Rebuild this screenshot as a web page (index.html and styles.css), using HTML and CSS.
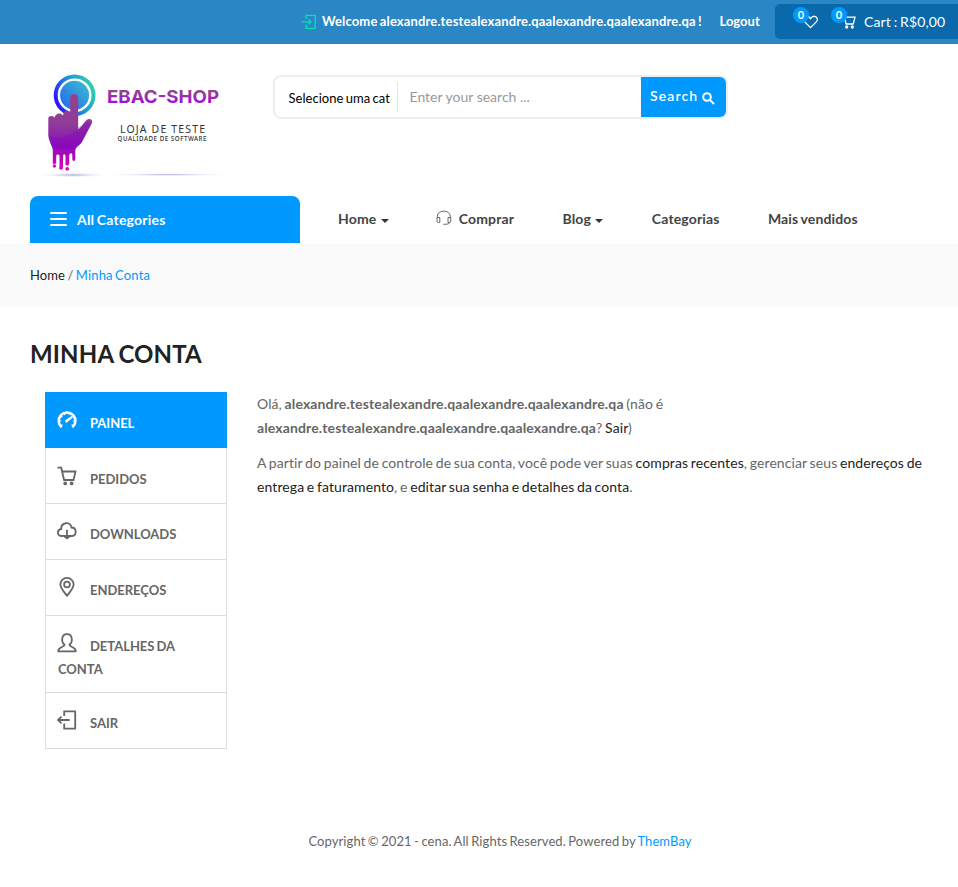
FILE: index.html
```html
<!DOCTYPE html>
<html lang="pt-BR">
<head>
<meta charset="utf-8">
<title>Minha Conta</title>
<link rel="stylesheet" href="styles.css">
</head>
<body>
<div class="topbar">
  <svg class="login-icon" width="16" height="16" viewBox="0 0 16 16"><path d="M5.2 5V1.3H14.2V14.3H5.2V10.5M.2 7.8H10M7.5 5.3L10 7.8L7.5 10.3"/></svg>
  <strong class="welcome">Welcome alexandre.testealexandre.qaalexandre.qaalexandre.qa !</strong>
  <a class="logout">Logout</a>
  <div class="cart-box">
    <div class="wish"><svg width="16" height="14" viewBox="0 0 16 14"><path d="M7.5 12.6L1.5 6.6C-.1 4.7.6 1.8 3.5 1.3C5.2 1.1 6.5 2 7.5 3.6C8.5 2 9.8 1.1 11.5 1.3C14.4 1.8 15.1 4.7 13.5 6.6Z"/></svg><span class="badge">0</span></div>
    <div class="cart"><svg width="15" height="14" viewBox="0 0 15 14"><path d="M.5 1.2H3L5.1 9H12.2L14 2.2H3.4"/><circle cx="5.7" cy="12" r="1"/><circle cx="11.3" cy="12" r="1"/></svg><span class="badge">0</span></div>
    <span class="cart-total">Cart : R$0,00</span>
  </div>
</div>
<header class="header">
  <svg class="logo" width="210" height="120" viewBox="0 0 210 120">
    <defs>
      <linearGradient id="ring" x1="0" y1=".7" x2="1" y2=".2"><stop offset="0" stop-color="#2c10ff"/><stop offset=".5" stop-color="#1c91dd"/><stop offset="1" stop-color="#30d5ac"/></linearGradient>
      <linearGradient id="disc" x1="0" y1="1" x2="1" y2="0"><stop offset="0" stop-color="#2463ed"/><stop offset="1" stop-color="#39c1cf"/></linearGradient>
      <linearGradient id="hand" x1="0" y1="0" x2="0" y2="1"><stop offset="0" stop-color="#96408c"/><stop offset=".4" stop-color="#903c9a"/><stop offset=".7" stop-color="#8c0cbc"/><stop offset="1" stop-color="#e500b4"/></linearGradient>
      <linearGradient id="name" x1="0" y1="0" x2="0" y2="1"><stop offset=".25" stop-color="#934489"/><stop offset=".8" stop-color="#a010d8"/></linearGradient>
      <radialGradient id="shade"><stop offset="0" stop-color="#aaa7dc"/><stop offset="1" stop-color="#fff" stop-opacity="0"/></radialGradient>
    </defs>
    <circle class="ring" cx="44.6" cy="30.3" r="18.9"/>
    <circle cx="44.6" cy="30.3" r="14.5" fill="url(#disc)"/>
    <path fill="url(#hand)" d="M40.2 33C40.2 27.5 48.2 27.5 48.2 33V64.5C51 63 53.5 58 56.5 55C59.5 53 63 54.5 62 58L53 75C51 80 46 81.5 45.3 85V94C45.3 96.5 42.3 96.5 42.3 94V90C42.3 87.5 39.2 87.5 39.2 91V99H35.5V91C35.3 88.5 33 88.5 33 91.5V103C33 104.5 29.5 104.5 29.5 103V91C29.3 89 26.2 89 26.2 91V98H22.8V85C22 80 18.5 76 18.3 70V53C18.5 50.3 24.5 50.3 24.8 53C24.8 47.5 32.3 47 33 51C33.3 44.5 39.5 44.5 40.2 48Z"/>
    <path d="M19 71C31 75 45 68 49 62L58 56L61 59L52 77L45 84H24Z" fill="#8000b8" opacity=".3"/>
    <circle cx="24.4" cy="97.5" r="1.7" fill="#cb0eb7"/><circle cx="24.4" cy="101" r="1.7" fill="#dd08b7"/><circle cx="30.9" cy="103" r="1.8" fill="#df08bc"/><circle cx="37.2" cy="99" r="1.8" fill="#cb0eb7"/><circle cx="37.2" cy="103.8" r="1.9" fill="#e606c0"/>
    <ellipse cx="43" cy="110" rx="36" ry="2.5" fill="url(#shade)"/><ellipse cx="138" cy="109.7" rx="66" ry="1.5" fill="url(#shade)"/>
    <text class="logo-name" x="77" y="38" textLength="112" lengthAdjust="spacingAndGlyphs" fill="url(#name)">EBAC-SHOP</text>
    <text class="logo-sub" x="90" y="68" textLength="85">LOJA DE TESTE</text>
    <text class="logo-tag" x="87.5" y="75.8" textLength="89">QUALIDADE DE SOFTWARE</text>
  </svg>
  <div class="search">
    <span class="category">Selecione uma cat</span>
    <span class="query">Enter your search ...</span>
    <span class="search-button">Search <svg width="13" height="13" viewBox="0 0 13 13"><circle cx="5" cy="5" r="3.8"/><path d="M7.9 7.9L12 12"/></svg></span>
  </div>
</header>
<div class="navrow">
  <div class="all-categories"><span class="bars"><i></i><i></i><i></i></span>All Categories</div>
  <nav class="nav">
    <a>Home<span class="caret"></span></a>
    <a><svg class="headset" width="16" height="16" viewBox="0 0 16 16"><path d="M1.3 7.5V6.3C1.3-.6 14.3-.6 14.3 6.3V7.5M1 7.5H3.8V12.5H2.5Q1 12.5 1 11ZM14.8 7.5H12V12.5H13.3Q14.8 12.5 14.8 11ZM13.5 12.5Q13.5 14.3 9.5 14.3H7.4"/></svg>Comprar</a>
    <a>Blog<span class="caret"></span></a>
    <a>Categorias</a>
    <a>Mais vendidos</a>
  </nav>
</div>
<div class="breadcrumb"><a>Home</a> / <span class="current">Minha Conta</span></div>
<main class="main">
  <h1>MINHA CONTA</h1>
  <div class="account">
    <ul class="menu">
      <li class="active"><svg viewBox="0 0 20 20"><path class="gauge" d="M4.7 17.3A8.4 8.4 0 1 1 15.4 17.3"/><path class="ticks" d="M1.5 11H4.2M3.5 5.8L5.4 7.2M7.1 3L8 5.1M12.9 3L12 5.1M18.5 11H15.8M3.5 15H5.7M16.5 15H14.3"/><path class="needle" d="M9.2 12.5L8.5 10.6L15 6.3L15.6 7.3Z"/></svg>PAINEL</li>
      <li><svg viewBox="0 0 20 20"><path d="M.5 1.7H4.2L7.1 14H16.5L18.5 5.5H5.3"/><circle cx="8.2" cy="17.4" r="1"/><circle cx="14.6" cy="17.4" r="1"/></svg>PEDIDOS</li>
      <li class="upper"><svg viewBox="0 0 20 20"><path d="M5.8 15H4.8C-.2 15-.3 8.5 4.2 8.2C3.8 1 13.5.1 14.5 6.5C19.8 6.4 20.2 15 15 15H13.2M10 8.8V17M6.8 15H13.2L10 17.4Z"/></svg>DOWNLOADS</li>
      <li class="upper"><svg viewBox="0 0 20 20"><path d="M10 18.7C7.2 14.8 3.4 11.5 3.4 7.5A6.6 6.6 0 0 1 16.6 7.5C16.6 11.5 12.8 14.8 10 18.7Z"/><circle cx="10" cy="7.5" r="2.9"/></svg>ENDEREÇOS</li>
      <li class="upper tall"><svg viewBox="0 0 20 20"><path d="M7.6 11.8C4.3 9.6 3.8 1.2 10 1.2S15.7 9.6 12.4 11.8C12.4 14.2 18.7 14 18.7 17.7V18.4H1.3V17.7C1.3 14 7.6 14.2 7.6 11.8Z"/></svg>DETALHES DA CONTA</li>
      <li class="upper"><svg viewBox="0 0 20 20"><path d="M7.2 6V1.3H18.2V18.7H7.2V13.5M1 10H12.7M4.5 6.7L1 10L4.5 13.3"/></svg>SAIR</li>
    </ul>
    <div class="content">
      <p>Olá, <strong>alexandre.testealexandre.qaalexandre.qaalexandre.qa</strong> (não é <strong>alexandre.testealexandre.qaalexandre.qaalexandre.qa</strong>? <a>Sair</a>)</p>
      <p>A partir do painel de controle de sua conta, você pode ver suas <a>compras recentes</a>, gerenciar seus <a>endereços de entrega e faturamento</a>, e <a>editar sua senha e detalhes da conta</a>.</p>
    </div>
  </div>
</main>
<footer class="footer">Copyright © 2021 - cena. All Rights Reserved. Powered by <a>ThemBay</a></footer>
</body>
</html>
```
FILE: styles.css
```css
* { box-sizing: border-box; }
body { margin: 0; height: 887px; overflow: hidden; background: #fff; color: #666; font: 14px/24px Lato, sans-serif; letter-spacing: .09px; word-spacing: -1px; }
svg { fill: none; stroke: currentColor; }
.topbar { height: 44px; background: #2a86c4; color: #fff; display: flex; align-items: flex-start; padding: 4px 0 0 301px; font-size: 13px; white-space: nowrap; }
.login-icon { flex: none; color: #00e5b4; margin: 10px 5px 0 0; stroke-width: 1.3; }
.welcome { width: 397.5px; line-height: 34px; letter-spacing: .14px; }
.logout { width: 55.5px; font-weight: bold; line-height: 34px; letter-spacing: 0; }
.cart-box { flex: 1; height: 35px; background: #0a69ab; border-radius: 5px 0 0 5px; display: flex; }
.wish, .cart { position: relative; margin-top: 11px; height: 14px; line-height: 0; stroke-width: 1.3; }
.wish { margin-left: 28px; width: 38px; }
.cart { width: 23px; }
.badge { position: absolute; left: -10px; top: -8px; width: 16px; height: 16px; border-radius: 50%; background: #09f; text-align: center; font: bold 11px/16px Lato, sans-serif; }
.cart-total { font-size: 14px; line-height: 36px; letter-spacing: .13px; }
.header { height: 152px; display: flex; padding-left: 30px; }
.logo { margin-top: 21px; stroke: none; flex: none; letter-spacing: 0; word-spacing: 0; }
.ring { fill: #fff; stroke: url(#ring); stroke-width: 4; }
.logo-name { font: bold 18px Inter, sans-serif; }
.logo-sub { font: 10.5px "Noto Sans", sans-serif; fill: #333; }
.logo-tag { font: 500 6.2px "Noto Sans", sans-serif; fill: #333; }
.search { margin: 31px 0 0 33px; width: 455px; height: 44px; border: 2px solid #eee; border-radius: 8px; display: flex; align-items: center; overflow: hidden; }
.category { width: 123px; height: 30px; line-height: 33px; padding-left: 13.5px; border-right: 1px solid #e5e5e5; color: #000; font-size: 13px; letter-spacing: .03px; white-space: nowrap; }
.query { flex: 1; padding-left: 11.5px; color: #999; line-height: 38px; letter-spacing: 0; word-spacing: 0; }
.search-button { width: 85px; height: 40px; background: #09f; color: #fff; padding-left: 9px; line-height: 38px; font-weight: 600; letter-spacing: 1.1px; white-space: nowrap; }
.search-button svg { stroke-width: 2; vertical-align: -4px; }
.navrow { display: flex; height: 48px; padding-left: 30px; }
.all-categories { width: 270px; height: 47px; border-radius: 8px 8px 0 0; background: #09f; color: #fff; display: flex; gap: 10px; padding-left: 20px; font-weight: bold; line-height: 48px; letter-spacing: .2px; }
.bars { display: flex; flex-direction: column; gap: 4px; margin-top: 16px; width: 17px; }
.bars i { height: 2px; border-radius: 1px; background: #fff; flex: none; }
.nav { display: flex; gap: 48.4px; margin-left: 38px; font-weight: bold; color: #444; line-height: 46px; letter-spacing: .14px; white-space: nowrap; }
.caret { display: inline-block; border: 4px solid transparent; border-top-color: #333; border-bottom: 0; margin-left: 4.5px; vertical-align: 1px; }
.headset { vertical-align: -2px; margin: 0 6.5px 0 -1px; stroke-width: .8; }
.breadcrumb { height: 62px; background: #fafafa; padding: 19px 30px; font-size: 13px; }
.breadcrumb a { color: #222; }
.breadcrumb .current { letter-spacing: .15px; }
.breadcrumb .current, .footer a { color: #09f; }
.main { height: 443px; padding: 30px 30px 0; }
h1 { margin: 0; font-size: 24px; line-height: 36px; color: #222; font-weight: bold; letter-spacing: .15px; }
.account { display: flex; padding: 20px 0 0 15px; }
.menu { list-style: none; margin: 0; padding: 0; width: 182px; flex: none; letter-spacing: -.03px; }
.menu li { height: 56px; border: 1px solid #ddd; border-top: 0; padding: 18.5px 12px 0; line-height: 23px; font-size: 13px; font-weight: bold; color: #666; }
.menu li.upper { padding-top: 17.5px; }
.menu li.tall { height: 77px; }
.menu li.active { background: #09f; border-color: #09f; color: #fff; }
.menu svg { width: 20px; height: 20px; margin: -1px 13px 0 -1px; vertical-align: -2px; stroke-width: 1.8; }
.menu .gauge { stroke-width: 2.5; }
.menu .ticks { stroke-width: 1.2; }
.menu .needle { fill: #fff; stroke-width: 1; }
.content { margin-left: 30px; width: 671px; }
.content p { margin: 0 0 11px; }
.content strong { letter-spacing: .125px; }
.content a { color: #222; }
.footer { margin-top: 80px; padding-left: 42px; text-align: center; font-size: 13px; letter-spacing: .09px; }
```
